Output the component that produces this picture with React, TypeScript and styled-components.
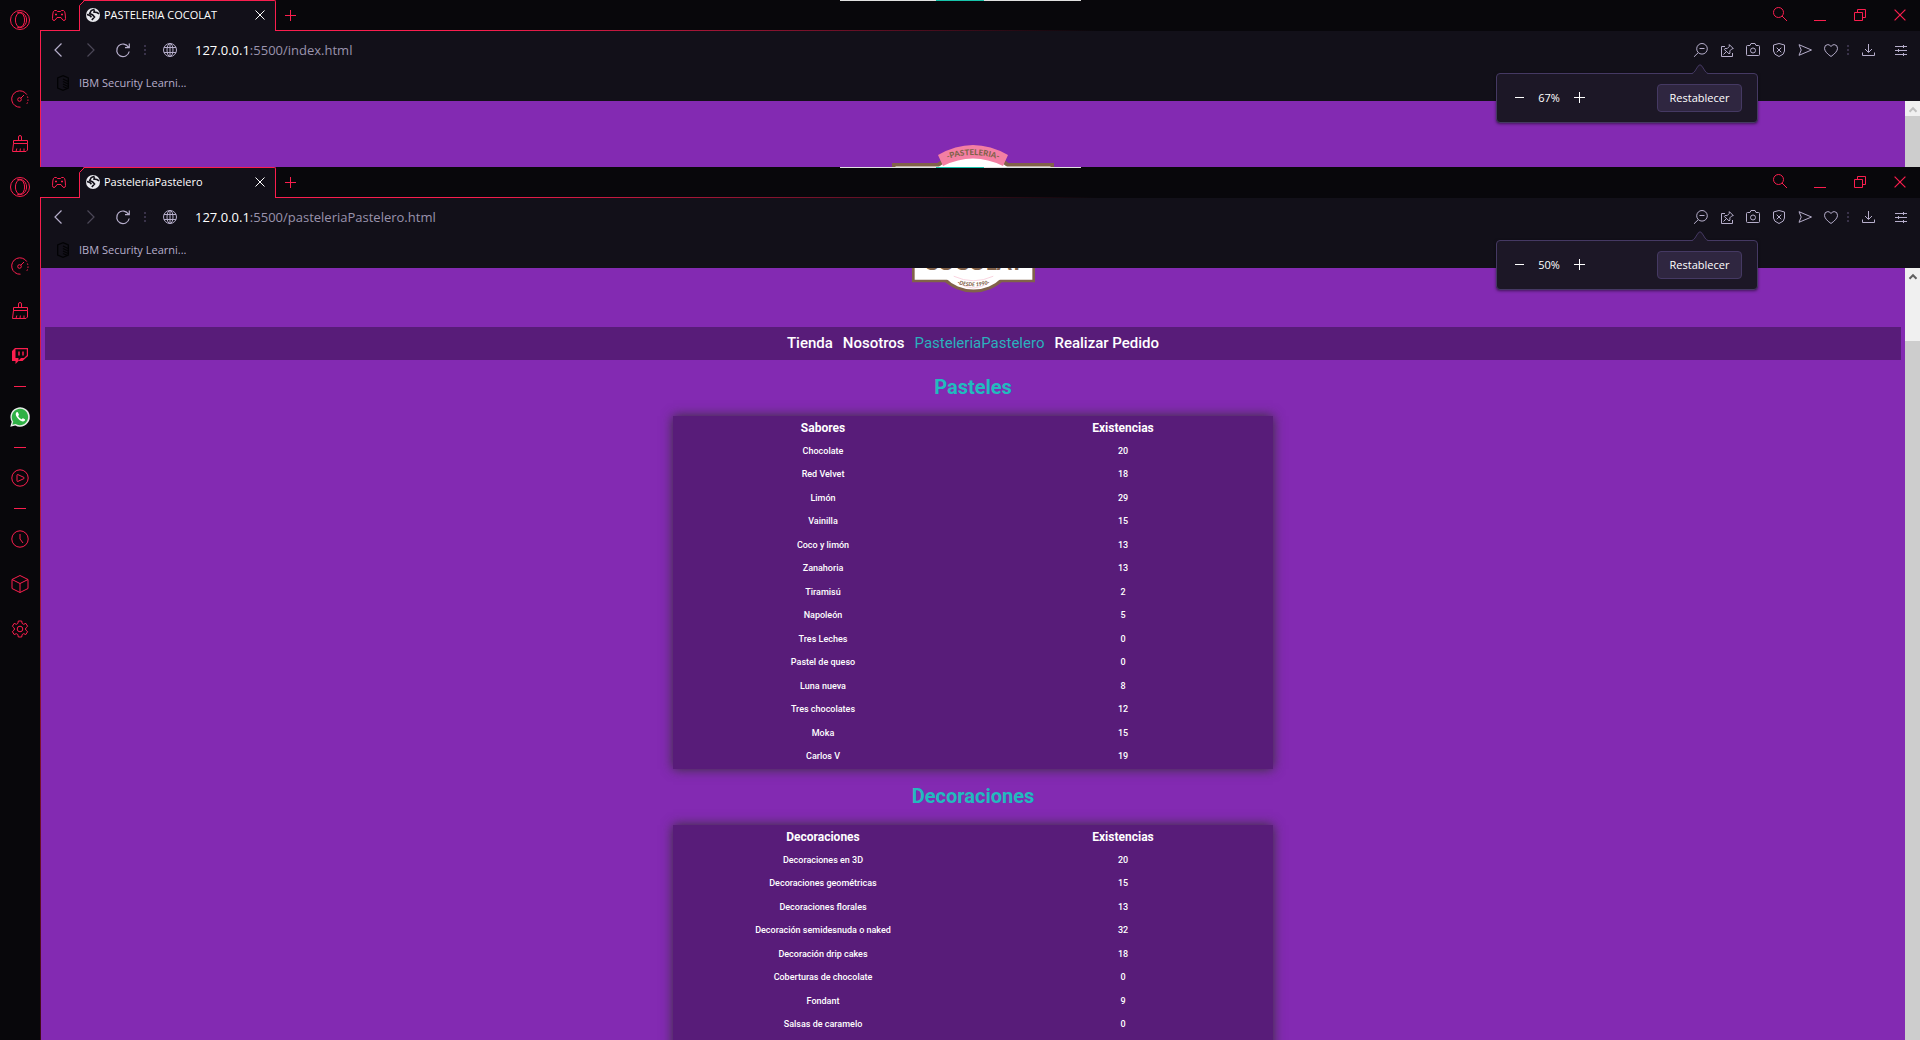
import React from "react";
import styled, { createGlobalStyle, css } from "styled-components";

const ui = `"Open Sans", "Noto Sans", sans-serif`;
const web = `Roboto, "Liberation Sans", sans-serif`;
const red = "#fa1e4e";

const Global = createGlobalStyle`
  *, *::before, *::after { box-sizing: border-box; }
  html, body, #root { height: 100%; }
  body { margin: 0; background: #08070b; overflow: hidden; }
  button { margin: 0; padding: 0; border: 0; background: none; color: inherit; font: inherit; }
  svg { display: block; flex: none; overflow: visible; }
`;

const Desktop = styled.div`
  position: relative;
  display: flex;
  flex-direction: column;
  height: 100vh;
`;

const Browser = styled.section<{ $grow?: boolean }>`
  position: relative;
  display: flex;
  min-height: 0;
  overflow: hidden;
  background: #08070b;
  font-family: ${ui};
  ${(p) => (p.$grow ? css`flex: 1;` : css`flex: none;`)}
`;

const CaptureHandle = styled.div`
  position: absolute;
  top: 0;
  left: calc(50% - 120px);
  width: 241px;
  height: 1px;
  background: linear-gradient(90deg, #e0e0e0 96px, #17c3ab 96px, #17c3ab 144px, #e0e0e0 144px);
  z-index: 3;
`;

const Side = styled.nav`
  flex: none;
  width: 40px;
  display: flex;
  flex-direction: column;
  align-items: center;
  color: ${red};
`;

const SideButton = styled.button<{ $logo?: boolean }>`
  display: flex;
  align-items: center;
  justify-content: center;
  flex: none;
  width: 40px;
  height: ${(p) => (p.$logo ? 40 : 45)}px;
  margin-bottom: ${(p) => (p.$logo ? 36 : 0)}px;
`;

const SideRule = styled.hr`
  flex: none;
  width: 12px;
  height: 1px;
  margin: 8px 0 7px;
  border: 0;
  background: ${red};
`;

const Main = styled.div`
  flex: 1;
  min-width: 0;
  display: flex;
  flex-direction: column;
`;

const TitleBar = styled.header`
  flex: none;
  display: flex;
  height: 31px;
  color: ${red};
`;

const TabsStart = styled.div`
  display: flex;
  align-items: center;
  width: 39px;
  padding-left: 12px;
  border-bottom: 1px solid ${red};
`;

const Tab = styled.div`
  position: relative;
  display: flex;
  align-items: center;
  width: 197px;
  padding: 0 10px 2px 7px;
  gap: 4px;
  background: #121019;
  border: 1px solid ${red};
  border-bottom: 0;
  border-left: 0;
  border-top-right-radius: 2px;
  clip-path: polygon(0 5px, 5px 0, 100% 0, 100% 100%, 0 100%);
  color: #fff;
  font-size: 11px;
  line-height: 16px;
`;

const TabEdge = styled.svg`
  position: absolute;
  left: 0;
  top: -1px;
`;

const TabTitle = styled.span`
  flex: 1;
  white-space: nowrap;
`;

const TitleRest = styled.div`
  flex: 1;
  display: flex;
  align-items: center;
  justify-content: space-between;
  border-bottom: 1px solid transparent;
  border-image: linear-gradient(90deg, ${red}, ${red} 12%, transparent 50%) 1;
  border-width: 0 0 1px;
`;

const WinButtons = styled.div`
  display: flex;
`;

const WinButton = styled.button`
  display: flex;
  align-items: center;
  justify-content: center;
  width: 40px;
  height: 30px;
`;

const NewTab = styled(WinButton)`
  width: 28px;
`;

const Body = styled.div<{ $fade?: boolean }>`
  flex: 1;
  min-height: 0;
  display: flex;
  flex-direction: column;
  border-left: 1px solid ${red};
  ${(p) => p.$fade && css`border-image: linear-gradient(180deg, ${red}, #3d0a1a 100%) 1; border-width: 0 0 0 1px;`}
`;

const Toolbar = styled.div`
  flex: none;
  display: flex;
  align-items: center;
  height: 38px;
  padding-right: 3px;
  background: #121019;
  color: #b6aecb;
`;

const ToolButton = styled.button<{ $w: number; $dim?: boolean }>`
  display: flex;
  align-items: center;
  justify-content: center;
  width: ${(p) => p.$w}px;
  height: 38px;
  opacity: ${(p) => (p.$dim ? 0.35 : 1)};
`;

const Dots = styled.span<{ $w: number }>`
  display: flex;
  justify-content: center;
  width: ${(p) => p.$w}px;
  color: #393249;
`;

const Address = styled.input`
  position: absolute;
  inset: 0;
  width: 100%;
  padding: 0;
  border: 0;
  outline: 0;
  background: none;
  color: transparent;
  font: inherit;
`;

const AddressBox = styled.label`
  position: relative;
  flex: 1;
  margin-left: 6px;
  font-size: 13px;
  line-height: 20px;
  white-space: nowrap;
  color: #9a93ad;
  b { font-weight: 400; color: #fff; }
`;

const Bookmarks = styled.div`
  flex: none;
  display: flex;
  height: 32px;
  padding: 0 16px 4px;
  background: #121019;
`;

const Bookmark = styled.a`
  display: flex;
  align-items: center;
  gap: 10px;
  color: #b6aecb;
  font-size: 11px;
  line-height: 16px;
  text-decoration: none;
`;

const Viewport = styled.div<{ $short?: boolean }>`
  display: flex;
  min-height: 0;
  background: #832ab2;
  ${(p) => (p.$short ? css`flex: none; height: 66px;` : css`flex: 1;`)}
`;

const Page = styled.main`
  flex: 1;
  min-width: 0;
  overflow: hidden;
  font-family: ${web};
`;

const ScrollTrack = styled.div<{ $thumb: number }>`
  flex: none;
  width: 15px;
  padding-top: 6px;
  display: flex;
  justify-content: center;
  background: linear-gradient(#f0f0f0 ${(p) => p.$thumb}px, #cdcdcd ${(p) => p.$thumb}px);
`;

const Popup = styled.div`
  position: absolute;
  top: 73px;
  right: 162px;
  width: 262px;
  height: 50px;
  padding: 0 15px 1px 13px;
  display: flex;
  align-items: center;
  background: #1c1726;
  border: 1px solid #453963;
  border-radius: 4px;
  box-shadow: 0 1px 3px rgba(0, 0, 0, 0.5);
  color: #fff;
  font-size: 11px;
  line-height: 16px;
  z-index: 2;
`;

const PopupTip = styled.svg`
  position: absolute;
  top: -10px;
  right: 49px;
`;

const StepButton = styled.button`
  display: flex;
  align-items: center;
  justify-content: center;
  width: 18px;
  height: 28px;
`;

const Percent = styled.output`
  width: 42px;
  text-align: center;
`;

const Reset = styled.button`
  margin-left: auto;
  width: 85px;
  height: 28px;
  background: #2f2640;
  border: 1px solid #453963;
  border-radius: 4px;
`;

const LogoWrap = styled.div<{ $top: number }>`
  display: flex;
  justify-content: center;
  margin-top: ${(p) => p.$top}px;
`;

const SiteNav = styled.nav`
  display: flex;
  justify-content: center;
  gap: 10px;
  margin: 34px 4px 0;
  padding: 6px 0 7px;
  background: #581c79;
  font-size: 15px;
  line-height: 20px;
  font-weight: 500;
`;

const SiteLink = styled.a<{ $active?: boolean }>`
  color: ${(p) => (p.$active ? "#2bb0bd" : "#fff")};
  font-weight: ${(p) => (p.$active ? 400 : 500)};
  text-decoration: none;
`;

const SectionTitle = styled.h2`
  margin: 0;
  padding: 15px 0 17px;
  color: #22babe;
  font-size: 20px;
  line-height: 24px;
  font-weight: 700;
  text-align: center;
`;

const Stock = styled.table`
  width: 600px;
  max-width: 100%;
  margin: 0 auto;
  table-layout: fixed;
  border-spacing: 0;
  background: #581c79;
  box-shadow: 0 0 11px #333;
  color: #fff;
  font-size: 9px;
  line-height: 12px;
  text-align: center;
  th, td { padding: 0 0 2px; }
  th { height: 24px; padding: 0; font-size: 12px; font-weight: 700; }
  td { height: 23px; font-weight: 500; }
  tr:nth-child(even) td { height: 24px; }
`;

const StockFrame = styled.div<{ $open?: boolean }>`
  ${(p) => p.$open && css`
    table { padding-bottom: 24px; }
  `}
`;

const line = { fill: "none", stroke: "currentColor", strokeWidth: 1 } as const;

const OperaIcon = () => (
  <svg width="20" height="20" viewBox="0 0 20 20" {...line}>
    <circle cx="10" cy="10" r="9.5" />
    <ellipse cx="10" cy="10" rx="4.6" ry="7.2" />
    <path d="M7 3.2C9 .9 16.6 3 16.6 10S9 19.100 7 16.800" />
  </svg>
);
const GaugeIcon = () => (
  <svg width="18" height="18" viewBox="0 0 18 18" {...line}>
    <path d="M9.500 17.200A8.200 8.200 0 1 1 15.800 4.600" />
    <path d="M16.400 6.500a8.200 8.200 0 0 1-1 8" strokeDasharray="1.500 1.500" />
    <circle cx="8.500" cy="9.500" r="1.800" />
    <path d="M9.800 8.200 13 5" />
  </svg>
);
const BrushIcon = () => (
  <svg width="18" height="18" viewBox="0 0 18 18" {...line}>
    <path d="M7.500 5.500V2a1.500 1.500 0 0 1 3 0v3.500M2.500 5.500h14v3h-14zM2.500 8.500 1.500 16.500h13.500l1.500-1.500V8.500M5 16.500l.8-3M9 16.500l.4-3M13 16.500v-3" />
  </svg>
);
const TwitchIcon = () => (
  <svg width="18" height="18" viewBox="0 0 18 18">
    <path d="M4 1 1 4v10h3.500v3l3-3h4L17 9V1zm.5 1.200h11.300v6L13 11h-3l-2.500 2.500V11h-3z" fill="currentColor" fillRule="evenodd" />
    <path d="M8 4.500v4M12 4.500v4" stroke="currentColor" strokeWidth="1.500" />
  </svg>
);
const WhatsIcon = () => (
  <svg width="20" height="20" viewBox="0 0 20 20">
    <path d="M.3 19.700 1.700 14.800A9.700 9.700 0 1 1 5.300 18.400z" fill="#e8ece9" />
    <path d="M2.300 17.700l.9-3.100A8.200 8.200 0 1 1 5.600 16.900z" fill="#2fb146" />
    <path d="M6.600 5.300c-1.600 1.300-.8 4 1.600 6.500s5 3.600 6.500 2c.5-.7.500-1.300.1-1.600l-1.700-.9c-.4-.2-.7 0-1.200.8-.4.500-3.900-2.300-3.700-3.200.4-.5.900-.8.700-1.300l-.8-1.900c-.3-.6-.9-.8-1.500-.4z" fill="#fff" />
  </svg>
);
const PlayIcon = () => (
  <svg width="18" height="18" viewBox="0 0 18 18" {...line}>
    <circle cx="9" cy="9" r="8.200" />
    <path d="M6 6.200v5.600q0 .9.900.6l6-2.800q.8-.6 0-1.200l-6-2.800Q6 5.300 6 6.200z" />
  </svg>
);
const ClockIcon = () => (
  <svg width="18" height="18" viewBox="0 0 18 18" {...line}>
    <circle cx="9" cy="9" r="8.200" />
    <path d="M9 4v5l3 4" />
  </svg>
);
const CubeIcon = () => (
  <svg width="18" height="18" viewBox="0 0 18 18" {...line}>
    <path d="M9 .5 17 4.500v9l-8 4-8-4v-9zM1 4.500l8 4 8-4M9 8.500v9" />
  </svg>
);
const GearIcon = () => (
  <svg width="18" height="18" viewBox="0 0 18 18" {...line}>
    <path d="M7.300 1h3.400l.4 2.400 1.500.9 2.300-.9 1.700 2.900L14.700 8v2l1.900 1.600-1.700 2.900-2.300-.8-1.500.9-.4 2.400H7.300l-.4-2.400-1.500-.9-2.300.8-1.700-2.900L3.300 10V8L1.400 6.300l1.700-2.900 2.300.9 1.500-.9z" />
    <circle cx="9" cy="9" r="2.800" />
  </svg>
);
const PadIcon = () => (
  <svg width="14" height="11" viewBox="0 0 14 11" {...line}>
    <path d="M2.500.5h2l1 1h3l1-1h2Q13 1 13.200 4l.3 4.500q0 2-1.500 2-1 0-2-1.500L9 7.500H5L4 9q-1 1.500-2 1.500-1.500 0-1.500-2L.8 4Q1 1 2.500.5z" />
    <path d="M4 3.500v2M3 4.500h2M9 4.500h2M10 3.500v2" />
  </svg>
);
const Favicon = () => (
  <svg width="14" height="14" viewBox="0 0 14 14">
    <circle cx="7" cy="7" r="7" fill="#e9e9ee" />
    <path d="M8.500 1.300 5.200 2.600 3.700 5.500l3 1.500 1.800 2-2.700 3M8.500 2 8 4l3 .5 2 1.300M1 6.500l2.900 1 1.500 1.800" fill="none" stroke="#121019" strokeWidth="1.600" />
  </svg>
);
const CloseIcon = ({ size = 10 }: { size?: number }) => (
  <svg width={size} height={size} viewBox="0 0 10 10" {...line}>
    <path d="M.5.5l9 9M9.500.5l-9 9" />
  </svg>
);
const PlusIcon = () => (
  <svg width="11" height="11" viewBox="0 0 11 11" {...line}>
    <path d="M5.500 0v11M0 5.500h11" />
  </svg>
);
const MinusIcon = () => (
  <svg width="9" height="11" viewBox="0 0 9 11" {...line}>
    <path d="M0 5.500h9" />
  </svg>
);
const SearchIcon = () => (
  <svg width="14" height="14" viewBox="0 0 14 14" {...line}>
    <circle cx="5.500" cy="4.500" r="5" />
    <path d="M9 8l5 5" />
  </svg>
);
const MinimizeIcon = () => (
  <svg width="12" height="12" viewBox="0 0 12 12" {...line}>
    <path d="M0 11.500h12" />
  </svg>
);
const RestoreIcon = () => (
  <svg width="12" height="12" viewBox="0 0 12 12" {...line}>
    <path d="M.5 3.500h8v8h-8zM3.500 3.500v-3h8v8h-3" />
  </svg>
);
const BackIcon = () => (
  <svg width="8" height="14" viewBox="0 0 8 14" {...line} strokeWidth={1.200}>
    <path d="M7.500.5 1 7l6.500 6.500" />
  </svg>
);
const NextIcon = () => (
  <svg width="8" height="14" viewBox="0 0 8 14" {...line} strokeWidth={1.200}>
    <path d="M.5.5 7 7 .5 13.500" />
  </svg>
);
const ReloadIcon = () => (
  <svg width="14" height="14" viewBox="0 0 14 14" {...line} strokeWidth={1.200}>
    <path d="M13.200 8.500A6.300 6.300 0 1 1 12.500 4.200M13.300.5v4.200H9" />
  </svg>
);
const GlobeIcon = () => (
  <svg width="14" height="14" viewBox="0 0 14 14" {...line}>
    <circle cx="7" cy="7" r="6.500" />
    <ellipse cx="7" cy="7" rx="3" ry="6.500" />
    <path d="M1 4.500h12M1 9.500h12M7 .5v13" />
  </svg>
);
const DotsIcon = () => (
  <svg width="2" height="11" viewBox="0 0 2 11" fill="currentColor">
    <path d="M0 0h2v2H0zM0 4h2v2H0zM0 8h2v2H0z" />
  </svg>
);
const ZoomOutIcon = () => (
  <svg width="14" height="14" viewBox="0 0 14 14" {...line}>
    <circle cx="8" cy="5.800" r="5.300" />
    <path d="M5.500 5.500h5M4.200 9.700 0 13.800" />
  </svg>
);
const PinIcon = () => (
  <svg width="13" height="13" viewBox="0 0 13 13" {...line}>
    <path d="M4 2.500H.5v10h11V9M8.300.6l4 4-1.500.3-2 2 .2 2.300-1 .6L3.300 5.500l.7-1 2.200.1 2-2zM5.500 7.500 2.500 10.500" />
  </svg>
);
const CameraIcon = () => (
  <svg width="14" height="14" viewBox="0 0 14 14" {...line}>
    <path d="M.5 3.500q0-1 1-1H4l1-2h4l1 2h2.500q1 0 1 1v8q0 1-1 1h-11q-1 0-1-1z" />
    <circle cx="7" cy="7.500" r="2.500" />
  </svg>
);
const ShieldIcon = () => (
  <svg width="12" height="14" viewBox="0 0 12 14" {...line}>
    <path d="M6 .5 11.500 2v6q0 3.500-5.500 5.500Q.5 11.500.5 8V2zM3.700 4.700l4.600 4.600M8.300 4.700 3.700 9.300" />
  </svg>
);
const SendIcon = () => (
  <svg width="14" height="12" viewBox="0 0 14 12" {...line}>
    <path d="M1 .7 13.500 6 1 11.300 3.200 6z" />
  </svg>
);
const HeartIcon = () => (
  <svg width="14" height="13" viewBox="0 0 14 13" {...line}>
    <path d="M7 12.500Q.5 8 .5 4.300.5.700 3.800.6 6 .6 7 2.600 8 .6 10.200.6q3.300.1 3.300 3.700Q13.500 8 7 12.500z" />
  </svg>
);
const DownloadIcon = () => (
  <svg width="13" height="12" viewBox="0 0 13 12" {...line}>
    <path d="M6.500 0v8M3 5l3.500 3.500L10 5M.5 8.500v3h12v-3" />
  </svg>
);
const TuneIcon = () => (
  <svg width="12" height="11" viewBox="0 0 12 11" {...line}>
    <path d="M0 1.500h12M0 5.500h12M0 9.500h12M8.500 0v3M3.500 4v3M8.500 8v3" />
  </svg>
);
const IbmIcon = () => (
  <svg width="12" height="16" viewBox="0 0 12 16" fill="none" stroke="#030305">
    <path d="M6 .7 11.300 3v10L6 15.300.7 13V3z" strokeWidth="1.300" />
    <path d="M6 4l5 2.500M6 6.500 11 9M6 9l5 2.500M6 11.500l4.500 2" strokeWidth="1.200" />
  </svg>
);

const LogoText = styled.text`
  font-family: Lato, sans-serif;
  font-weight: 900;
  fill: #81624a;
  text-anchor: middle;
`;

const Logo = ({ width, half }: { width: number; half: "top" | "bottom" }) => (
  <svg width={width} height={Math.round((width * 121) / 162)} viewBox="0 0 162 121" role="img" aria-label="Pastelería Cocolat">
    <defs>
      <path id="ribbon-line" d="M46 18Q81 2 116 18" />
      <path id="since-line" d="M41 100Q81 124.600 121 100" />
    </defs>
    <circle cx="81" cy="63" r="57.500" fill="#81624a" />
    <path d="M0 18h162v89H0z" fill="#81624a" />
    <path d="M3.500 21.500h155v82h-155z" fill="#fff" />
    <circle cx="81" cy="63" r="53.500" fill="#fff" />
    {half === "top" ? (
      <>
        <path d="M46 10Q81-10 116 10L111 21Q81 6 51 21z" fill="#f47fa3" />
        <LogoText fontSize="8">
          <textPath href="#ribbon-line" startOffset="50%">-PASTELERIA-</textPath>
        </LogoText>
      </>
    ) : (
      <>
        <LogoText x="81" y="91" fontSize="28">COCOLAT</LogoText>
        <path d="M55 99Q81 111 107 99M60 107Q81 122 102 107" fill="none" stroke="#f7c6d6" />
        <LogoText fontSize="7" fontStyle="italic">
          <textPath href="#since-line" startOffset="50%">·DESDE 1990·</textPath>
        </LogoText>
      </>
    )}
  </svg>
);

function Sidebar({ long }: { long?: boolean }) {
  return (
    <Side aria-label="Barra lateral">
      <SideButton $logo aria-label="Opera"><OperaIcon /></SideButton>
      <SideButton aria-label="GX Control"><GaugeIcon /></SideButton>
      <SideButton aria-label="GX Cleaner"><BrushIcon /></SideButton>
      {long && (
        <>
          <SideButton aria-label="Twitch"><TwitchIcon /></SideButton>
          <SideRule />
          <SideButton aria-label="WhatsApp"><WhatsIcon /></SideButton>
          <SideRule />
          <SideButton aria-label="Player"><PlayIcon /></SideButton>
          <SideRule />
          <SideButton aria-label="Historial"><ClockIcon /></SideButton>
          <SideButton aria-label="Extensiones"><CubeIcon /></SideButton>
          <SideButton aria-label="Ajustes"><GearIcon /></SideButton>
        </>
      )}
    </Side>
  );
}

interface WindowProps {
  title: string;
  path: string;
  zoom: string;
  thumb: number;
  arrow: string;
  grow?: boolean;
  children: React.ReactNode;
}

function BrowserWindow({ title, path, zoom, thumb, arrow, grow, children }: WindowProps) {
  return (
    <Browser $grow={grow}>
      <CaptureHandle />
      <Sidebar long={grow} />
      <Main>
        <TitleBar>
          <TabsStart><PadIcon /></TabsStart>
          <Tab>
            <TabEdge width="6" height="31" viewBox="0 0 6 31" {...line} stroke={red}>
              <path d="M.5 31V5.500L5.500.5" />
            </TabEdge>
            <Favicon />
            <TabTitle>{title}</TabTitle>
            <button aria-label="Cerrar pestaña"><CloseIcon /></button>
          </Tab>
          <TitleRest>
            <NewTab aria-label="Nueva pestaña"><PlusIcon /></NewTab>
            <WinButtons>
              <WinButton aria-label="Buscar"><SearchIcon /></WinButton>
              <WinButton aria-label="Minimizar"><MinimizeIcon /></WinButton>
              <WinButton aria-label="Restaurar"><RestoreIcon /></WinButton>
              <WinButton aria-label="Cerrar"><CloseIcon size={12} /></WinButton>
            </WinButtons>
          </TitleRest>
        </TitleBar>
        <Body $fade={grow}>
          <Toolbar>
            <ToolButton $w={33} aria-label="Atrás"><BackIcon /></ToolButton>
            <ToolButton $w={33} $dim aria-label="Adelante"><NextIcon /></ToolButton>
            <ToolButton $w={31} aria-label="Recargar"><ReloadIcon /></ToolButton>
            <Dots $w={13}><DotsIcon /></Dots>
            <ToolButton $w={38} aria-label="Información del sitio"><GlobeIcon /></ToolButton>
            <AddressBox>
              <b>127.0.0.1</b>:5500/{path}
              <Address aria-label="Dirección" />
            </AddressBox>
            <ToolButton $w={26} aria-label="Zoom"><ZoomOutIcon /></ToolButton>
            <ToolButton $w={26} aria-label="Pinboard"><PinIcon /></ToolButton>
            <ToolButton $w={26} aria-label="Instantánea"><CameraIcon /></ToolButton>
            <ToolButton $w={26} aria-label="Bloqueador"><ShieldIcon /></ToolButton>
            <ToolButton $w={26} aria-label="Flow"><SendIcon /></ToolButton>
            <ToolButton $w={26} aria-label="Favoritos"><HeartIcon /></ToolButton>
            <Dots $w={8}><DotsIcon /></Dots>
            <ToolButton $w={33} aria-label="Descargas"><DownloadIcon /></ToolButton>
            <ToolButton $w={32} aria-label="Configuración fácil"><TuneIcon /></ToolButton>
          </Toolbar>
          <Bookmarks>
            <Bookmark href="#"><IbmIcon />IBM Security Learni...</Bookmark>
          </Bookmarks>
          <Viewport $short={!grow}>
            <Page>{children}</Page>
            <ScrollTrack $thumb={thumb}>
              <svg width="8" height="6" viewBox="0 0 8 6" fill="none" stroke={arrow} strokeWidth="2">
                <path d="M.5 4.800 4 1.200l3.500 3.600" />
              </svg>
            </ScrollTrack>
          </Viewport>
        </Body>
      </Main>
      <Popup>
        <PopupTip width="16" height="11" viewBox="0 0 16 11">
          <path d="M0 10Q1.500 9.500 3 7L6 2.200Q8-.8 10 2.200L13 7q1.500 2.500 3 3v1H0z" fill="#1c1726" />
          <path d="M0 9.500Q1.500 9 3 7L6 2.200Q8-.8 10 2.200L13 7q1.500 2 3 2.500" fill="none" stroke="#453963" />
        </PopupTip>
        <StepButton aria-label="Alejar"><MinusIcon /></StepButton>
        <Percent>{zoom}</Percent>
        <StepButton aria-label="Acercar"><PlusIcon /></StepButton>
        <Reset>Restablecer</Reset>
      </Popup>
    </Browser>
  );
}

type Row = [string, number];

const cakes: Row[] = [
  ["Chocolate", 20],
  ["Red Velvet", 18],
  ["Limón", 29],
  ["Vainilla", 15],
  ["Coco y limón", 13],
  ["Zanahoria", 13],
  ["Tiramisú", 2],
  ["Napoleón", 5],
  ["Tres Leches", 0],
  ["Pastel de queso", 0],
  ["Luna nueva", 8],
  ["Tres chocolates", 12],
  ["Moka", 15],
  ["Carlos V", 19],
];

const decorations: Row[] = [
  ["Decoraciones en 3D", 20],
  ["Decoraciones geométricas", 15],
  ["Decoraciones florales", 13],
  ["Decoración semidesnuda o naked", 32],
  ["Decoración drip cakes", 18],
  ["Coberturas de chocolate", 0],
  ["Fondant", 9],
  ["Salsas de caramelo", 0],
];

function StockTable({ name, rows, open }: { name: string; rows: Row[]; open?: boolean }) {
  return (
    <StockFrame $open={open}>
      <Stock>
        <thead>
          <tr><th scope="col">{name}</th><th scope="col">Existencias</th></tr>
        </thead>
        <tbody>
          {rows.map(([label, count]) => (
            <tr key={label}><td>{label}</td><td>{count}</td></tr>
          ))}
        </tbody>
      </Stock>
    </StockFrame>
  );
}

export default function App() {
  return (
    <Desktop>
      <Global />
      <BrowserWindow title="PASTELERIA COCOLAT" path="index.html" zoom="67%" thumb={15} arrow="#bfbfbf">
        <LogoWrap $top={44}><Logo width={162} half="top" /></LogoWrap>
      </BrowserWindow>
      <BrowserWindow title="PasteleriaPastelero" path="pasteleriaPastelero.html" zoom="50%" thumb={73} arrow="#606060" grow>
        <LogoWrap $top={-67}><Logo width={123} half="bottom" /></LogoWrap>
        <SiteNav>
          <SiteLink href="#">Tienda</SiteLink>
          <SiteLink href="#">Nosotros</SiteLink>
          <SiteLink href="#" $active>PasteleriaPastelero</SiteLink>
          <SiteLink href="#">Realizar Pedido</SiteLink>
        </SiteNav>
        <SectionTitle>Pasteles</SectionTitle>
        <StockTable name="Sabores" rows={cakes} />
        <SectionTitle>Decoraciones</SectionTitle>
        <StockTable name="Decoraciones" rows={decorations} open />
      </BrowserWindow>
    </Desktop>
  );
}
